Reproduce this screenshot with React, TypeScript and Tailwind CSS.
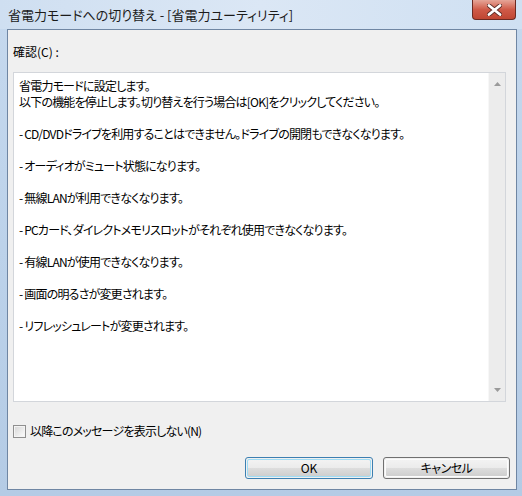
import React from 'react';

const jp = "font-['Noto_Sans_CJK_JP','Noto_Sans',sans-serif] [font-feature-settings:'palt']";

const lines = [
  '省電力モードに設定します。',
  '以下の機能を停止します。切り替えを行う場合は[OK]をクリックしてください。',
  '',
  '- CD/DVDドライブを利用することはできません。ドライブの開閉もできなくなります。',
  '',
  '- オーディオがミュート状態になります。',
  '',
  '- 無線LANが利用できなくなります。',
  '',
  '- PCカード、ダイレクトメモリスロットがそれぞれ使用できなくなります。',
  '',
  '- 有線LANが使用できなくなります。',
  '',
  '- 画面の明るさが変更されます。',
  '',
  '- リフレッシュレートが変更されます。',
];

function Arrow({ down }: { down?: boolean }) {
  return (
    <svg width="7" height="4" viewBox="0 0 7 4">
      <path d={down ? 'M0 0 H7 L3.5 4 Z' : 'M0 4 H7 L3.5 0 Z'} fill="#9a9a9a" />
    </svg>
  );
}

export default function App() {
  return (
    <div className={`w-[522px] h-[496px] flex flex-col bg-gradient-to-b from-[#c6d9ee] via-[#bcd2ea] to-[#b4cbe5] text-[12px] text-black ${jp}`}>
      {/* title bar */}
      <div className="h-[29px] flex items-start bg-gradient-to-r from-[#cfdff1] via-[#dbe7f5] to-[#cfe0f2]">
        <div className="pl-[8px] pt-[6px] leading-[18px] text-[13px] text-[#1b1b1b]">
          省電力モードへの切り替え - [省電力ユーティリティ]
        </div>
        <div className="ml-auto mr-[6px] w-[44px] h-[20px] rounded-b-[4px] border border-t-0 border-[#6b2a22] bg-gradient-to-b from-[#e5a598] via-[#cf5a48] to-[#c04632] flex items-center justify-center">
          <svg width="15" height="12" viewBox="0 0 15 12">
            <path d="M2 1.5 L13 10.5 M13 1.5 L2 10.5" stroke="#5a2a24" strokeWidth="4.4" strokeLinecap="round" />
            <path d="M2 1.5 L13 10.5 M13 1.5 L2 10.5" stroke="#ffffff" strokeWidth="2.8" strokeLinecap="round" />
          </svg>
        </div>
      </div>

      {/* client area */}
      <div className="ml-[7px] mr-[5px] mb-[6px] flex-1 border border-[#6f86a3] bg-[#f0f0f0] flex flex-col">
        <div className="pl-[5px] mt-[14px] leading-[16px]">確認(C) :</div>

        <div className="ml-[5px] mt-[12px] w-[493px] h-[330px] border border-[#d3d6db] bg-white flex">
          <div className="flex-1 pl-[5px] pt-[5px] leading-[16px] whitespace-pre tracking-[-0.8px]">
            {lines.map((l, i) => (
              <div key={i} className="h-[16px]">{l}</div>
            ))}
          </div>
          <div className="w-[17px] bg-[#ececec] border-l border-[#f7f7f7] flex flex-col items-center justify-between py-[9px]">
            <Arrow />
            <Arrow down />
          </div>
        </div>

        <div className="ml-[5px] mt-[21px] flex items-center gap-[4px] leading-[16px]">
          <div className="w-[13px] h-[13px] border border-[#8f8f8f] p-px bg-[#f4f4f4]">
            <div className="w-full h-full bg-gradient-to-br from-[#d9d9d9] to-[#fafafa]" />
          </div>
          <span className="tracking-[-0.8px]">以降このメッセージを表示しない(N)</span>
        </div>

        <div className="mt-auto mb-[10px] mr-[6px] flex justify-end gap-[10px]">
          <div className="w-[128px] h-[22px] rounded-[3px] border border-[#3c7fb1] p-px">
            <div className="w-full h-full rounded-[2px] border border-[#9fdcf5] bg-[linear-gradient(to_bottom,#f2f2f2_0%,#ebebeb_50%,#dddddd_51%,#cfcfcf_100%)] flex items-center justify-center leading-none">
              OK
            </div>
          </div>
          <div className="w-[127px] h-[22px] rounded-[3px] border border-[#707070] p-px">
            <div className="w-full h-full rounded-[2px] border border-[#fcfcfc] bg-[linear-gradient(to_bottom,#f2f2f2_0%,#ebebeb_50%,#dddddd_51%,#cfcfcf_100%)] flex items-center justify-center leading-none tracking-[-0.5px]">
              キャンセル
            </div>
          </div>
        </div>
      </div>
    </div>
  );
}
